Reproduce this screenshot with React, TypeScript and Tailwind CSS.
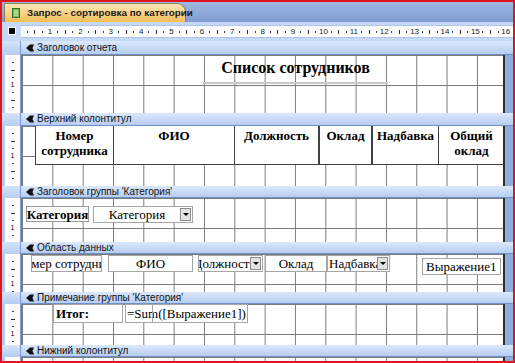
import type { ReactNode } from 'react'

const serif = "font-['Liberation_Serif',serif]"
const ui = "font-['Liberation_Sans',sans-serif]"

const gridBg =
  '[background-image:linear-gradient(to_right,#7b7b7b_1px,transparent_1px),linear-gradient(to_bottom,#7b7b7b_1px,transparent_1px)] [background-size:30.33px_30px]'

function QueryIcon() {
  return (
    <svg width="8" height="10" viewBox="0 0 8 10" className="shrink-0">
      <rect x="0.5" y="0.5" width="7" height="9" fill="#7cbd58" stroke="#2f6b2a" />
      <path d="M2 3h4M2 5h4M2 7h4" stroke="#d9f1c9" strokeWidth="1" />
    </svg>
  )
}

function SelectorIcon() {
  return (
    <svg width="8" height="8" viewBox="0 0 8 8" className="shrink-0">
      <path d="M0 4 L4 0.5 L8 0.5 L6.5 4 L8 7.5 L4 7.5 Z" fill="#111" />
    </svg>
  )
}

function HRuler() {
  return (
    <div className="flex h-[19px] shrink-0 bg-[#c6d9f6] pt-[3px]">
      <div className="flex w-[19px] shrink-0 justify-center pt-[3px]">
        <div className="size-[6px] bg-black outline outline-1 outline-white" />
      </div>
      <div className="flex h-[13px] flex-1 items-center overflow-hidden border-y border-[#adc5ec] bg-white pl-[2.5px]">
        {Array.from({ length: 64 }, (_, i) => (
          <div key={i} className="flex w-[7.6px] shrink-0 justify-center">
            {i % 4 === 3 ? (
              <span className={`text-[8px] leading-none text-[#222] ${ui}`}>{(i + 1) / 4}</span>
            ) : i % 4 === 1 ? (
              <div className="h-[4px] w-px bg-[#333]" />
            ) : (
              <div className="h-[2px] w-px bg-[#444]" />
            )}
          </div>
        ))}
      </div>
    </div>
  )
}

function VRuler() {
  return (
    <div className="flex w-[19px] shrink-0 bg-[#b3cbef]">
      <div className="ml-[3px] flex w-[16px] flex-col items-center overflow-hidden border-r border-[#7c9bd3] bg-white pt-[3.75px]">
        {Array.from({ length: 7 }, (_, i) => (
          <div key={i} className="flex h-[7.5px] shrink-0 items-center justify-center">
            {i === 3 ? (
              <span className={`text-[8px] leading-none text-[#222] ${ui}`}>1</span>
            ) : i % 4 === 1 ? (
              <div className="h-px w-[4px] bg-[#333]" />
            ) : (
              <div className="h-px w-[2px] bg-[#444]" />
            )}
          </div>
        ))}
      </div>
    </div>
  )
}

function Band({ title, h }: { title: string; h: string }) {
  return (
    <div className={`flex shrink-0 ${h}`}>
      <div className="w-[19px] shrink-0 border-r border-[#7c9bd3] bg-linear-to-b from-[#d5e4fa] to-[#b5cdf1]" />
      <div
        className={`flex flex-1 items-center gap-[3px] border-b border-[#6f8fc8] bg-linear-to-b from-[#dbe8fb] to-[#b6cdf2] pl-[5px] text-[10px] leading-none text-[#111] ${ui}`}
      >
        <SelectorIcon />
        {title}
      </div>
    </div>
  )
}

function Section({ h, children }: { h: string; children?: ReactNode }) {
  return (
    <div className={`flex shrink-0 ${h}`}>
      <VRuler />
      <div className={`w-[484px] shrink-0 overflow-hidden border-l border-r-2 border-l-[#7b7b7b] border-r-[#2e2e2e] bg-white ${gridBg}`}>
        {children}
      </div>
      <div className="flex-1 bg-[#8dade0]" />
    </div>
  )
}

function DropBtn() {
  return (
    <div className="my-auto mr-px flex h-[13px] w-[11px] shrink-0 items-center justify-center border border-[#8c8c8c] bg-[#e2e2e2]">
      <div className="border-x-[3px] border-t-[3px] border-x-transparent border-t-black" />
    </div>
  )
}

function Field({ w, text, className = '', combo = false, pad = 'justify-center' }: { w: string; text: string; className?: string; combo?: boolean; pad?: string }) {
  return (
    <div className={`flex h-[17px] shrink-0 border border-[#a6a6a6] bg-white ${w} ${className}`}>
      <div className={`flex min-w-0 flex-1 items-center overflow-hidden whitespace-nowrap text-[13px] leading-none text-black ${serif} ${pad}`}>
        <span className="shrink-0">{text}</span>
      </div>
      {combo && <DropBtn />}
    </div>
  )
}

const headers: { label: ReactNode; w: string }[] = [
  { label: <>Номер<br />сотрудника</>, w: 'w-[78px]' },
  { label: 'ФИО', w: 'w-[121px]' },
  { label: 'Должность', w: 'w-[85px] border-r-2' },
  { label: 'Оклад', w: 'w-[53px] border-r-2' },
  { label: 'Надбавка', w: 'w-[66px]' },
  { label: <>Общий<br />оклад</>, w: 'w-[65px] border-r-0' },
]

export default function App() {
  return (
    <div className="flex h-[363px] w-[515px] flex-col overflow-hidden border-2 border-[#e0141c] bg-[#b3cbef]">
      {/* window tab */}
      <div className="flex h-[20px] shrink-0 bg-linear-to-b from-[#9fb8e0] to-[#7f9dd2] pl-[2px] pt-[1px]">
        <div className="flex h-[19px] w-[182px] items-center gap-[7px] rounded-tr-[9px] border border-b-0 border-[#8d7d5c] bg-linear-to-b from-[#fde7b4] to-[#f6bd55] pl-[7px]">
          <QueryIcon />
          <span className={`whitespace-nowrap text-[9.8px] font-bold text-[#1a1a1a] ${ui}`}>Запрос - сортировка по категории</span>
        </div>
      </div>

      <HRuler />

      <Band title="Заголовок отчета" h="h-[14px]" />
      <Section h="h-[58px]">
        <div className={`ml-[181px] h-[29px] w-[185px] border-b-2 border-[#c9c9c9] text-center text-[16px] font-bold leading-[25px] text-black ${serif}`}>
          Список сотрудников
        </div>
      </Section>

      <Band title="Верхний колонтитул" h="h-[13px]" />
      <Section h="h-[60px]">
        <div className="ml-[13px] flex h-[39px] border-b border-l border-[#404040] bg-white">
          {headers.map((c, i) => (
            <div
              key={i}
              className={`shrink-0 border-r border-[#404040] pt-[2px] text-center text-[13px] font-bold leading-[15px] text-black ${serif} ${c.w}`}
            >
              {c.label}
            </div>
          ))}
        </div>
      </Section>

      <Band title="Заголовок группы 'Категория'" h="h-[12px]" />
      <Section h="h-[44px]">
        <div className="ml-[4px] mt-[8px] flex items-start">
          <div className={`flex h-[16px] w-[63px] items-center justify-center border border-[#9a9a9a] bg-white text-[13px] font-bold leading-none text-black ${serif}`}>
            Категория
          </div>
          <Field w="w-[100px] h-[16px]" className="ml-[4px]" text="Категория" combo />
        </div>
      </Section>

      <Band title="Область данных" h="h-[12px]" />
      <Section h="h-[38px]">
        <div className="ml-[9px] mt-px flex items-start">
          <Field w="w-[71px]" text="Номер сотрудника" />
          <Field w="w-[85px]" className="ml-[6px]" text="ФИО" />
          <Field w="w-[65px]" className="ml-[5px]" text="Должность" combo />
          <Field w="w-[62px]" className="ml-[2px]" text="Оклад" />
          <Field w="w-[63px]" text="Надбавка" combo pad="pl-px" />
          <Field w="w-[79px]" className="ml-[32px] mt-[3px]" text="Выражение1" pad="pl-[3px]" />
        </div>
      </Section>

      <Band title="Примечание группы 'Категория'" h="h-[12px]" />
      <Section h="h-[41px]">
        <div className="ml-[31px] flex items-start">
          <div className={`flex h-[19px] w-[70px] items-center border border-[#a6a6a6] bg-white pl-[2px] text-[13px] font-bold leading-none text-black ${serif}`}>
            Итог:
          </div>
          <div className={`relative ml-[2px] flex h-[19px] w-[123px] items-center border border-[#a6a6a6] bg-white pl-px text-[13px] leading-none text-black ${serif}`}>
            =Sum([Выражение1])
            <div className="absolute inset-y-[-1px] left-[-1px] w-[28px] border border-[#a6a6a6]" />
          </div>
        </div>
      </Section>

      <Band title="Нижний колонтитул" h="h-[12px]" />
      <Section h="flex-1" />
    </div>
  )
}
